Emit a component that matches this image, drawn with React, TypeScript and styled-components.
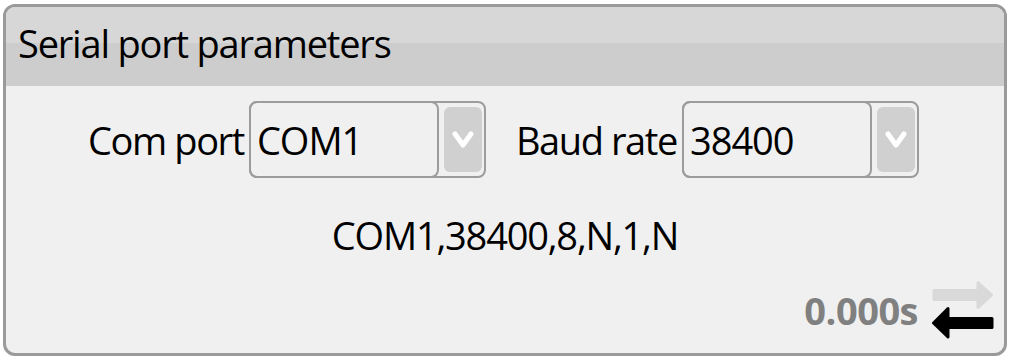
import React from "react";
import { styled, createGlobalStyle } from "styled-components";

const GlobalStyle = createGlobalStyle`
  html, body {
    margin: 0;
    padding: 0;
    background: #ffffff;
  }
  body {
    font-family: "Open Sans", "Liberation Sans", sans-serif;
    color: #000;
  }
`;

function Chevron() {
  return (
    <svg width="24" height="20" viewBox="0 0 24 20">
      <path d="M4 4 L12 15 L20 4" fill="none" stroke="#ffffff" strokeWidth="5" strokeLinecap="round" strokeLinejoin="round" />
    </svg>
  );
}

// send / receive arrows, grey one idle, black one active
function Arrows() {
  return (
    <svg width="62" height="60" viewBox="0 0 62 60">
      <path
        d="M2 11.5 H46 V3.5 L59.5 16 L46 28.5 V20.5 H2 Z"
        fill="#d9d9d9"
        stroke="#d9d9d9"
        strokeWidth="3"
        strokeLinejoin="round"
      />
      <path
        d="M60 39.5 H16 V29.5 L1.5 44 L16 58 V48.5 H60 Z"
        fill="#000000"
        stroke="#000000"
        strokeWidth="3"
        strokeLinejoin="round"
      />
    </svg>
  );
}

function Combo({ value }: { value: string }) {
  return (
    <ComboBox>
      <ComboField>{value}</ComboField>
      <ComboButton>
        <Chevron />
      </ComboButton>
    </ComboBox>
  );
}

export default function App() {
  return (
    <>
      <GlobalStyle />
      <Page>
        <Panel>
          <Header>Serial port parameters</Header>
          <Body>
            <Row>
              <Field>
                <Label>Com port</Label>
                <Combo value="COM1" />
              </Field>
              <Field>
                <Label>Baud rate</Label>
                <Combo value="38400" />
              </Field>
            </Row>
            <Summary>COM1,38400,8,N,1,N</Summary>
            <Footer>
              <Timer>0.000s</Timer>
              <Arrows />
            </Footer>
          </Body>
        </Panel>
      </Page>
    </>
  );
}

const Page = styled.div`
  width: 1013px;
  height: 362px;
  padding: 4px 6px 6px 3px;
  box-sizing: border-box;
`;

const Panel = styled.div`
  height: 100%;
  box-sizing: border-box;
  border: 3px solid #9a9a9a;
  border-radius: 12px;
  overflow: hidden;
  display: flex;
  flex-direction: column;
  background: #f0f0f0;
`;

const Header = styled.div`
  height: 79px;
  box-sizing: border-box;
  padding: 0 0 8px 12px;
  display: flex;
  align-items: center;
  background: linear-gradient(#d7d7d7 0, #d7d7d7 46%, #cdcdcd 46%, #cdcdcd 100%);
  font-size: 38px;
  letter-spacing: -1.2px;
`;

const Body = styled.div`
  flex: 1;
  display: flex;
  flex-direction: column;
  align-items: center;
  padding-top: 15px;
`;

const Row = styled.div`
  display: flex;
  align-items: center;
  gap: 30px;
  margin-left: -3px;
`;

const Field = styled.div`
  display: flex;
  align-items: center;
  gap: 5px;
`;

const Label = styled.span`
  font-size: 38px;
  letter-spacing: -1.4px;
`;

const ComboBox = styled.div`
  width: 237px;
  height: 77px;
  box-sizing: border-box;
  border: 2px solid #9c9c9c;
  border-radius: 8px;
  display: flex;
  align-items: stretch;
`;

const ComboField = styled.div`
  flex: 1;
  margin: -2px 0 -2px -2px;
  border: 2px solid #9c9c9c;
  border-radius: 8px;
  padding-left: 6px;
  display: flex;
  align-items: center;
  font-size: 38px;
  letter-spacing: -1px;
`;

const ComboButton = styled.div`
  width: 38px;
  margin: 4px 2px 4px 5px;
  border-radius: 6px;
  background: #d0d0d0;
  display: flex;
  align-items: center;
  justify-content: center;
`;

const Summary = styled.div`
  margin-top: 31px;
  font-size: 38px;
  letter-spacing: -1.2px;
`;

const Footer = styled.div`
  align-self: flex-end;
  display: flex;
  align-items: center;
  gap: 14px;
  margin-top: 18px;
  margin-right: 10px;
`;

const Timer = styled.span`
  font-size: 38px;
  font-weight: bold;
  color: #808080;
  letter-spacing: -0.5px;
  margin-top: 2px;
`;
